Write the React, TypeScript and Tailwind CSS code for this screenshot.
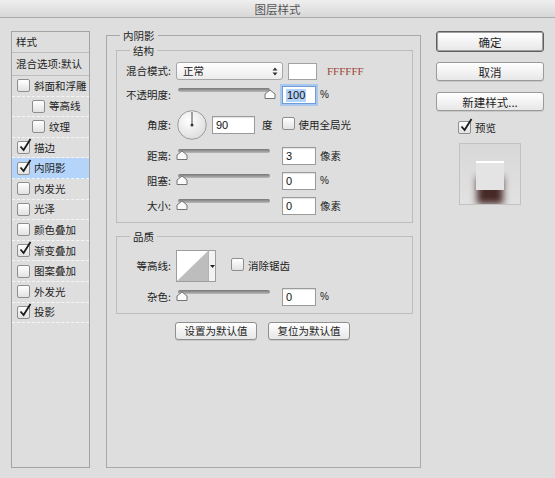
import React from "react";

const styleRows = [
  { name: "斜面和浮雕", checked: false, indent: false },
  { name: "等高线", checked: false, indent: true },
  { name: "纹理", checked: false, indent: true },
  { name: "描边", checked: true, indent: false },
  { name: "内阴影", checked: true, indent: false, active: true },
  { name: "内发光", checked: false, indent: false },
  { name: "光泽", checked: false, indent: false },
  { name: "颜色叠加", checked: false, indent: false },
  { name: "渐变叠加", checked: true, indent: false },
  { name: "图案叠加", checked: false, indent: false },
  { name: "外发光", checked: false, indent: false },
  { name: "投影", checked: true, indent: false },
];

function Check({ checked }: { checked?: boolean }) {
  return (
    <span className="relative inline-block w-[13px] h-[13px] shrink-0 rounded-[2px] border border-[#8e8e8e] bg-linear-to-b from-white to-[#e2e2e2]">
      {checked && (
        <svg
          className="absolute -top-[4px] left-[1px] overflow-visible"
          width="13"
          height="14"
          viewBox="0 0 13 14"
        >
          <path d="M1.5 8.5 L4.6 12 L11.5 1" fill="none" stroke="#1b1b1b" strokeWidth="1.8" />
        </svg>
      )}
    </span>
  );
}

function Legend({ children }: { children: React.ReactNode }) {
  return (
    <div className="-mt-[7px] ml-[13px] w-fit px-[3px] h-[14px] leading-[14px] bg-[#dedede]">
      {children}
    </div>
  );
}

function Row({
  label,
  className,
  children,
}: {
  label: string;
  className: string;
  children: React.ReactNode;
}) {
  return (
    <div className={`flex items-center ${className}`}>
      <span className="w-[56px] pr-[2px] text-right whitespace-nowrap">{label}</span>
      <div className="ml-[3px] flex items-center">{children}</div>
    </div>
  );
}

function Field({ value, className, focus }: { value: string; className: string; focus?: boolean }) {
  return (
    <div
      className={`flex items-center h-[18px] bg-white pl-[3px] font-['Liberation_Sans',sans-serif] text-[11px] text-[#111] ${className} ${
        focus
          ? "border border-[#6f9bd6] shadow-[0_0_0_2px_#a9c8ef]"
          : "border border-[#9b9b9b] shadow-[inset_0_1px_1px_rgba(0,0,0,0.12)]"
      }`}
    >
      {focus ? <span className="bg-[#b3d3fb] px-[1px] leading-[13px]">{value}</span> : <span>{value}</span>}
    </div>
  );
}

function Slider({ pos }: { pos: number }) {
  const x = 6 + pos * 88;
  return (
    <svg width="102" height="18" className="shrink-0">
      <defs>
        <linearGradient id="trk" x1="0" y1="0" x2="0" y2="1">
          <stop offset="0" stopColor="#767676" />
          <stop offset="1" stopColor="#b9b9b9" />
        </linearGradient>
      </defs>
      <rect x="2" y="2" width="92" height="4" rx="2" fill="url(#trk)" />
      <path
        d={`M${x} 4 L${x + 5} 8 L${x + 5} 12.5 L${x - 5} 12.5 L${x - 5} 8 Z`}
        fill="#fbfbfb"
        stroke="#747474"
        strokeLinejoin="round"
      />
    </svg>
  );
}

function Btn({ children, className }: { children: React.ReactNode; className: string }) {
  return (
    <div
      className={`flex items-center justify-center rounded-[3px] bg-linear-to-b from-white to-[#e7e7e7] shadow-[0_1px_0_rgba(0,0,0,0.1)] ${className}`}
    >
      {children}
    </div>
  );
}

export default function App() {
  return (
    <div className="w-[555px] h-[478px] overflow-hidden bg-[#dedede] text-[10.5px] leading-[14px] text-[#222] font-['Noto_Sans_CJK_SC',sans-serif]">
      <div className="h-[18px] flex items-center justify-center border-b border-[#a9a9a9] bg-linear-to-b from-[#efefef] to-[#d7d7d7] text-[11.5px] text-[#555]">
        图层样式
      </div>

      <div className="flex pl-[11px] pt-[13px]">
        {/* style list */}
        <div className="w-[79px] h-[437px] border border-[#a3a3a3]">
          <div className="h-[21px] pl-[4px] flex items-center border-b border-[#bdbdbd]">样式</div>
          <div className="h-[23px] pl-[4px] flex items-center border-b border-[#bdbdbd] whitespace-nowrap">
            混合选项:默认
          </div>
          {styleRows.map((r) => (
            <div
              key={r.name}
              className={`h-[20.6px] flex items-center gap-[4px] border-b border-dashed border-[#f6f6f6] whitespace-nowrap ${
                r.indent ? "pl-[20px]" : "pl-[5px]"
              } ${r.active ? "bg-[#b4d4fa]" : ""}`}
            >
              <Check checked={r.checked} />
              <span>{r.name}</span>
            </div>
          ))}
        </div>

        {/* settings */}
        <div className="ml-[16px] mt-[4px] w-[315px] h-[433px] border border-[#a9a9a9]">
          <Legend>内阴影</Legend>

          <div className="ml-[9px] mt-[7px] w-[297px] border border-[#bcbcbc] pb-[7px]">
            <Legend>结构</Legend>
            <Row label="混合模式:" className="mt-[4px] h-[18px]">
              <div className="flex items-center justify-between w-[107px] h-[18px] rounded-[3px] border border-[#a6a6a6] bg-linear-to-b from-white to-[#ececec] pl-[6px] pr-[4px]">
                <span>正常</span>
                <svg width="6" height="9" viewBox="0 0 6 9">
                  <path d="M0.5 3.5 L3 0.5 L5.5 3.5 Z M0.5 5.5 L3 8.5 L5.5 5.5 Z" fill="#333" />
                </svg>
              </div>
              <div className="ml-[5px] w-[29px] h-[17px] bg-white border border-[#a2a2a2]" />
              <span className="ml-[10px] font-['Liberation_Serif',serif] text-[11px] text-[#9c4636]">FFFFFF</span>
            </Row>
            <Row label="不透明度:" className="mt-[6px] h-[18px]">
              <Slider pos={1} />
              <Field value="100" className="ml-[4px] w-[34px]" focus />
              <span className="ml-[4px] font-['Liberation_Sans',sans-serif] text-[10px]">%</span>
            </Row>
            <Row label="角度:" className="mt-[6px] h-[30px]">
              <svg width="30" height="30" className="ml-[1px] shrink-0">
                <defs>
                  <radialGradient id="dial" cx="0.4" cy="0.35" r="0.7">
                    <stop offset="0" stopColor="#ffffff" />
                    <stop offset="1" stopColor="#dcdcdc" />
                  </radialGradient>
                </defs>
                <circle cx="15" cy="15" r="14.3" fill="url(#dial)" stroke="#9c9c9c" />
                <line x1="15" y1="15" x2="15" y2="2" stroke="#4a4a4a" strokeWidth="1" />
                <circle cx="15" cy="15" r="1.5" fill="#333" />
              </svg>
              <Field value="90" className="ml-[5px] w-[43px]" />
              <span className="ml-[7px]">度</span>
              <span className="ml-[9px]">
                <Check />
              </span>
              <span className="ml-[4px] whitespace-nowrap">使用全局光</span>
            </Row>
            <Row label="距离:" className="mt-[7px] h-[18px]">
              <Slider pos={0} />
              <Field value="3" className="ml-[4px] w-[34px]" />
              <span className="ml-[4px]">像素</span>
            </Row>
            <Row label="阻塞:" className="mt-[7px] h-[18px]">
              <Slider pos={0} />
              <Field value="0" className="ml-[4px] w-[34px]" />
              <span className="ml-[4px] font-['Liberation_Sans',sans-serif] text-[10px]">%</span>
            </Row>
            <Row label="大小:" className="mt-[7px] h-[18px]">
              <Slider pos={0} />
              <Field value="0" className="ml-[4px] w-[34px]" />
              <span className="ml-[4px]">像素</span>
            </Row>
          </div>

          <div className="ml-[9px] mt-[13px] w-[297px] border border-[#bcbcbc] pb-[7px]">
            <Legend>品质</Legend>
            <Row label="等高线:" className="mt-[6px] h-[32px]">
              <div className="flex h-[32px] border border-[#9d9d9d] bg-white">
                <svg width="31" height="30" className="shrink-0">
                  <path d="M0 30 L31 0 L31 30 Z" fill="#bdbdbd" />
                </svg>
                <div className="w-[7px] flex items-center justify-center border-l border-[#b4b4b4] bg-[#f3f3f3]">
                  <svg width="5" height="3" viewBox="0 0 5 3">
                    <path d="M0 0 L5 0 L2.5 3 Z" fill="#222" />
                  </svg>
                </div>
              </div>
              <span className="ml-[15px]">
                <Check />
              </span>
              <span className="ml-[4px] whitespace-nowrap">消除锯齿</span>
            </Row>
            <Row label="杂色:" className="mt-[6px] h-[18px]">
              <Slider pos={0} />
              <Field value="0" className="ml-[4px] w-[34px]" />
              <span className="ml-[4px] font-['Liberation_Sans',sans-serif] text-[10px]">%</span>
            </Row>
          </div>

          <div className="flex gap-[11px] ml-[68px] mt-[8px]">
            <Btn className="w-[82px] h-[18px] border border-[#8f8f8f]">设置为默认值</Btn>
            <Btn className="w-[82px] h-[18px] border border-[#8f8f8f]">复位为默认值</Btn>
          </div>
        </div>

        {/* buttons */}
        <div className="ml-[15px] w-[108px] flex flex-col text-[11.5px] text-[#1e1e1e]">
          <Btn className="h-[21px] border border-[#5e5e5e] shadow-[inset_0_0_0_1px_#a0a0a0]">确定</Btn>
          <Btn className="mt-[10px] h-[19px] border border-[#9a9a9a]">取消</Btn>
          <Btn className="mt-[11px] h-[19px] border border-[#9a9a9a]">新建样式...</Btn>
          <div className="mt-[10px] ml-[22px] h-[13px] flex items-center gap-[4px] text-[10.5px]">
            <Check checked />
            <span>预览</span>
          </div>
          <div className="mt-[9px] ml-[23px] w-[62px] h-[62px] overflow-hidden border border-[#c2c2c2] bg-linear-to-b from-[#d8d8d8] to-[#e2e2e2] flex justify-center pt-[17px]">
            <div className="w-[28px] h-[29px] bg-[#e4e4e4] border-t-2 border-white shadow-[0_15px_7px_-1px_rgba(62,32,30,0.95)]" />
          </div>
        </div>
      </div>
    </div>
  );
}
